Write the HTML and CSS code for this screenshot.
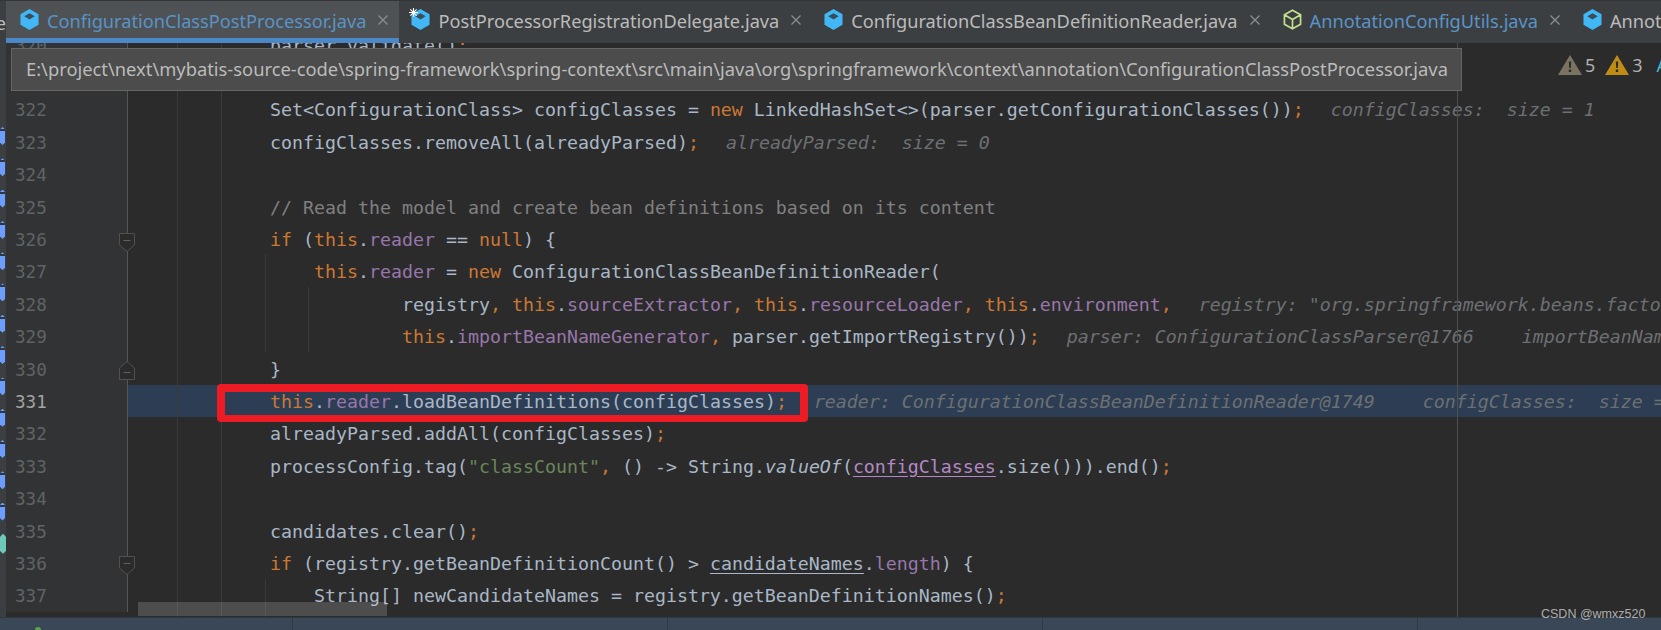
FILE: index.html
```html
<!DOCTYPE html>
<html lang="en">
<head>
<meta charset="utf-8">
<title>ConfigurationClassPostProcessor.java</title>
<link rel="stylesheet" href="styles.css">
</head>
<body>
<svg class="defs" width="0" height="0" aria-hidden="true">
  <symbol id="cube" viewBox="0 0 20 22">
    <path d="M10 0 19.5 5.5V16.500L10 22 .5 16.500V5.500Z" fill="#41b8f5"/>
    <path d="M10 4.500 15.500 7.700 10 10.900 4.500 7.700Z" fill="#3a4d5a"/>
  </symbol>
  <symbol id="cube-outline" viewBox="0 0 20 22">
    <path d="M10 1.200 18.500 6V16L10 20.800 1.500 16V6ZM1.500 6 10 11 18.500 6M10 11V20.800" fill="none" stroke="#c5e08c" stroke-width="1.800" stroke-linejoin="round"/>
  </symbol>
  <symbol id="close" viewBox="0 0 10 10">
    <path d="M.5 .5 9.500 9.500M9.500 .5 .5 9.500" stroke="#8b8e90" stroke-width="1.300" fill="none"/>
  </symbol>
  <symbol id="fold-start" viewBox="0 0 16 19">
    <path d="M.5 .5H15.500V12L8 18.500 .5 12Z" fill="#2b2b2b" stroke="#505050"/>
    <path d="M4.500 7.500H11.500" stroke="#606060"/>
  </symbol>
  <symbol id="fold-end" viewBox="0 0 16 19">
    <path d="M.5 18.500H15.500V7L8 .5 .5 7Z" fill="#2b2b2b" stroke="#505050"/>
    <path d="M4.500 11.500H11.500" stroke="#606060"/>
  </symbol>
  <symbol id="warn" viewBox="0 0 24 20">
    <path d="M12 0 24 20H0Z" fill="currentColor"/>
    <path d="M10.800 6.500H13.200L12.800 13H11.200ZM10.800 14.500H13.200V17H10.800Z" fill="#2b2b2b"/>
  </symbol>
</svg>

<div class="app">
  <header class="tabbar">
    <div class="tab-cut"><span>e</span></div>
    <div class="tab tab-active">
      <svg class="tab-icon"><use href="#cube"/></svg>
      <span class="tab-name tab-name-blue">ConfigurationClassPostProcessor.java</span>
      <svg class="tab-close"><use href="#close"/></svg>
    </div>
    <div class="tab">
      <span class="icon-wrap">
        <svg class="tab-icon"><use href="#cube"/></svg>
        <svg class="snow" viewBox="0 0 10 10"><path d="M5 0V10M0 5H10M1.500 1.500 8.500 8.500M8.500 1.500 1.500 8.500" stroke="#fff" stroke-width="1.200"/></svg>
      </span>
      <span class="tab-name">PostProcessorRegistrationDelegate.java</span>
      <svg class="tab-close"><use href="#close"/></svg>
    </div>
    <div class="tab">
      <svg class="tab-icon"><use href="#cube"/></svg>
      <span class="tab-name">ConfigurationClassBeanDefinitionReader.java</span>
      <svg class="tab-close"><use href="#close"/></svg>
    </div>
    <div class="tab">
      <svg class="tab-icon"><use href="#cube-outline"/></svg>
      <span class="tab-name tab-name-blue">AnnotationConfigUtils.java</span>
      <svg class="tab-close"><use href="#close"/></svg>
    </div>
    <div class="tab">
      <svg class="tab-icon"><use href="#cube"/></svg>
      <span class="tab-name">AnnotationBeanNameGenerator.java</span>
    </div>
  </header>

  <main class="workspace">
    <aside class="strip">
      <i class="stub"></i><i class="stub"></i><i class="stub"></i><i class="stub"></i><i class="stub"></i><i class="stub"></i><i class="stub"></i><i class="stub"></i><i class="stub"></i><i class="stub"></i><i class="stub"></i><i class="stub"></i><i class="stub"></i><i class="stub stub-teal"></i>
    </aside>
    <section class="editor">
      <div class="rows">
        <div class="row"><div class="num">320</div><pre class="code">parser.validate()<b>;</b></pre></div>
        <div class="row"><div class="num"></div><pre class="code"></pre></div>
        <div class="row"><div class="num">322</div><pre class="code">Set&lt;ConfigurationClass&gt; configClasses = <b>new</b> LinkedHashSet&lt;&gt;(parser.getConfigurationClasses())<b>;</b><em>configClasses:  size = 1</em></pre></div>
        <div class="row"><div class="num">323</div><pre class="code">configClasses.removeAll(alreadyParsed)<b>;</b><em>alreadyParsed:  size = 0</em></pre></div>
        <div class="row"><div class="num">324</div><pre class="code"></pre></div>
        <div class="row"><div class="num">325</div><pre class="code"><u>// Read the model and create bean definitions based on its content</u></pre></div>
        <div class="row"><div class="num">326<svg class="fold fold-start"><use href="#fold-start"/></svg></div><pre class="code"><b>if</b> (<b>this</b>.<s>reader</s> == <b>null</b>) {</pre></div>
        <div class="row"><div class="num">327</div><pre class="code">    <b>this</b>.<s>reader</s> = <b>new</b> ConfigurationClassBeanDefinitionReader(</pre></div>
        <div class="row"><div class="num">328</div><pre class="code">            registry<b>,</b> <b>this</b>.<s>sourceExtractor</s><b>,</b> <b>this</b>.<s>resourceLoader</s><b>,</b> <b>this</b>.<s>environment</s><b>,</b><em>registry: "org.springframework.beans.factory.support.DefaultListableBeanFactory"</em></pre></div>
        <div class="row"><div class="num">329</div><pre class="code">            <b>this</b>.<s>importBeanNameGenerator</s><b>,</b> parser.getImportRegistry())<b>;</b><em>parser: ConfigurationClassParser@1766</em><em class="next">importBeanNameGenerator</em></pre></div>
        <div class="row"><div class="num">330<svg class="fold fold-end"><use href="#fold-end"/></svg></div><pre class="code">}</pre></div>
        <div class="row row-current"><div class="num">331</div><pre class="code"><b>this</b>.<s>reader</s>.loadBeanDefinitions(configClasses)<b>;</b><em>reader: ConfigurationClassBeanDefinitionReader@1749</em><em class="next">configClasses:  size = 1</em></pre></div>
        <div class="row"><div class="num">332</div><pre class="code">alreadyParsed.addAll(configClasses)<b>;</b></pre></div>
        <div class="row"><div class="num">333</div><pre class="code">processConfig.tag(<q>"classCount"</q><b>,</b> () -&gt; String.<i>valueOf</i>(<a class="reassigned">configClasses</a>.size())).end()<b>;</b></pre></div>
        <div class="row"><div class="num">334</div><pre class="code"></pre></div>
        <div class="row"><div class="num">335</div><pre class="code">candidates.clear()<b>;</b></pre></div>
        <div class="row"><div class="num">336<svg class="fold fold-start"><use href="#fold-start"/></svg></div><pre class="code"><b>if</b> (registry.getBeanDefinitionCount() &gt; <a>candidateNames</a>.<s>length</s>) {</pre></div>
        <div class="row"><div class="num">337</div><pre class="code">    String[] newCandidateNames = registry.getBeanDefinitionNames()<b>;</b></pre></div>
      </div>
      <div class="guide guide-a"></div>
      <div class="guide guide-b"></div>
      <div class="guide guide-c"></div>
      <div class="guide guide-d"></div>
      <div class="guide guide-e"></div>
      <div class="guide-margin"></div>
      <div class="callout"></div>
      <div class="thumb"></div>
    </section>
  </main>

  <footer class="status">
    <div class="cell cell-first"><span class="dot"></span></div>
    <div class="cell"></div>
    <div class="cell"></div>
    <div class="cell"></div>
    <div class="cell cell-last"></div>
  </footer>

  <div class="tooltip">E:\project\next\mybatis-source-code\spring-framework\spring-context\src\main\java\org\springframework\context\annotation\ConfigurationClassPostProcessor.java</div>

  <div class="inspections">
    <svg class="warn warn-weak"><use href="#warn"/></svg><span>5</span>
    <svg class="warn warn-strong"><use href="#warn"/></svg><span>3</span>
    <span class="reader-a">A</span>
  </div>

  <div class="watermark">CSDN @wmxz520</div>
</div>
</body>
</html>
```

FILE: styles.css
```css
* { box-sizing: border-box; }
html, body { margin: 0; padding: 0; background: #2b2b2b; }
.defs { position: absolute; }

.app {
  position: relative;
  width: 1661px;
  height: 630px;
  display: flex;
  flex-direction: column;
  overflow: hidden;
  font-family: "Noto Sans", "Open Sans", sans-serif;
}

/* tabs */
.tabbar {
  flex: 0 0 43px;
  display: flex;
  background: #3c3f41;
  border-top: 1px solid #333537;
  overflow: hidden;
  white-space: nowrap;
}
.tab-cut {
  flex: 0 0 6px;
  display: flex;
  justify-content: flex-end;
  overflow: hidden;
  color: #bbbbbb;
  font-size: 18.200px;
  line-height: 44px;
}
.tab {
  flex: none;
  display: flex;
  align-items: center;
  height: 42px;
  padding: 0 11px 5px 12px;
}
.tab-active {
  background: #4e5254;
  border-bottom: 5px solid #4a88c7;
  padding: 0 11px 0 14px;
}
.tab-icon { width: 19px; height: 21px; flex: none; display: block; }
.icon-wrap { position: relative; display: block; width: 19px; height: 21px; }
.snow { position: absolute; left: -2px; top: -1px; width: 9px; height: 9px; }
.tab-name {
  margin-left: 8px;
  padding-top: 2px;
  font-size: 18.200px;
  color: #bbbbbb;
}
.tab-name-blue { color: #5a93c6; }
.tab-close { width: 10px; height: 10px; margin-left: 12px; flex: none; }

/* workspace */
.workspace { flex: 1; min-height: 0; display: flex; }
.strip {
  flex: 0 0 6px;
  background: #3c3f41;
  padding-top: 84px;
  display: flex;
  flex-direction: column;
  gap: 13.300px;
}
.stub {
  display: block;
  flex: none;
  width: 5px;
  height: 18px;
  background: linear-gradient(#6d9eff 0 2px, #2f3640 2px 4px, #6d9eff 4px);
  clip-path: polygon(0 14%, 50% 0, 100% 14%, 100% 86%, 50% 100%, 0 86%);
}
.stub-teal { background: #6fc8b7; width: 6px; height: 20px; }

.editor {
  position: relative;
  flex: 1;
  min-width: 0;
  background: #2b2b2b;
  overflow: hidden;
}
.rows { margin-top: -14.300px; }
.row { display: flex; height: 32.400px; }
.num {
  position: relative;
  flex: 0 0 122px;
  padding-left: 9px;
  background: #313335;
  border-right: 1px solid #555555;
  color: #606366;
  font: 17.600px/34px "DejaVu Sans Mono", monospace;
}
.code {
  flex: 1;
  min-width: 0;
  margin: 0;
  padding-left: 142px;
  overflow: hidden;
  color: #a9b7c6;
  font: 18.270px/34px "DejaVu Sans Mono", monospace;
  white-space: pre;
}
.code b { font-weight: normal; color: #cc7832; }
.code s { text-decoration: none; color: #9876aa; }
.code u { text-decoration: none; color: #808080; }
.code q { quotes: none; color: #6a8759; }
.code i { font-style: italic; }
.code a { text-decoration: underline; text-underline-offset: 3px; }
.code a.reassigned { color: #b389c5; }
.code em { font-style: italic; color: #6c7073; margin-left: 27px; }
.code em.next { margin-left: 48px; }
.row-current .num { color: #a4a3a3; }
.row-current .code { background: #2d3e54; }
.fold { position: absolute; left: 113px; width: 16px; height: 19px; }
.fold-start { top: 9.500px; }
.fold-end { top: 8px; }

.guide { position: absolute; width: 1px; background: #3a3a3a; }
.guide-a { left: 171px; top: 0; bottom: 0; }
.guide-b { left: 215px; top: 0; bottom: 0; }
.guide-c { left: 259px; top: 211px; height: 98px; }
.guide-d { left: 302px; top: 244px; height: 65px; }
.guide-e { left: 259px; top: 536px; bottom: 0; }
.guide-margin { position: absolute; left: 1451px; top: 0; bottom: 0; width: 1px; background: #4f4f4f; }

.callout {
  position: absolute;
  left: 211px;
  top: 341px;
  width: 591px;
  height: 38px;
  border: 8px solid #ed1c24;
  border-bottom-width: 7px;
  border-radius: 4px;
}
.thumb {
  position: absolute;
  left: 132px;
  top: 559px;
  width: 249px;
  height: 14px;
  background: rgba(255, 255, 255, 0.16);
}

/* status */
.status {
  flex: 0 0 13px;
  display: flex;
  background: #3a4756;
  border-top: 1px solid #2f3742;
}
.cell { position: relative; flex: 0 0 375px; border-right: 1px solid #2f3a48; }
.cell-first { flex-basis: 293px; }
.cell-last { flex: 1; border-right: 0; }
.dot {
  position: absolute;
  left: 35px;
  top: 9px;
  width: 6px;
  height: 6px;
  border-radius: 50%;
  background: #57a64a;
}

/* overlays */
.tooltip {
  position: absolute;
  left: 11px;
  top: 48px;
  width: 1451px;
  height: 43px;
  padding-left: 14px;
  background: #4b4c4b;
  border: 1px solid #666666;
  color: #bbbbbb;
  font-size: 18.330px;
  line-height: 39px;
  white-space: nowrap;
}
.inspections {
  position: absolute;
  left: 1558px;
  top: 55px;
  display: flex;
  align-items: center;
  height: 20px;
  color: #b0b0b0;
  font-size: 18px;
  white-space: nowrap;
}
.warn { width: 24px; height: 20px; flex: none; margin-right: 3px; }
.warn-weak { color: #7a7361; }
.warn-strong { color: #c08c14; margin-left: 10px; margin-right: 3px; }
.reader-a { margin-left: 14px; color: #45b9cf; }
.watermark {
  position: absolute;
  left: 1541px;
  top: 605px;
  color: rgba(255, 255, 255, 0.62);
  font: 12.500px/18px "Liberation Sans", Arial, sans-serif;
  white-space: nowrap;
}
```
